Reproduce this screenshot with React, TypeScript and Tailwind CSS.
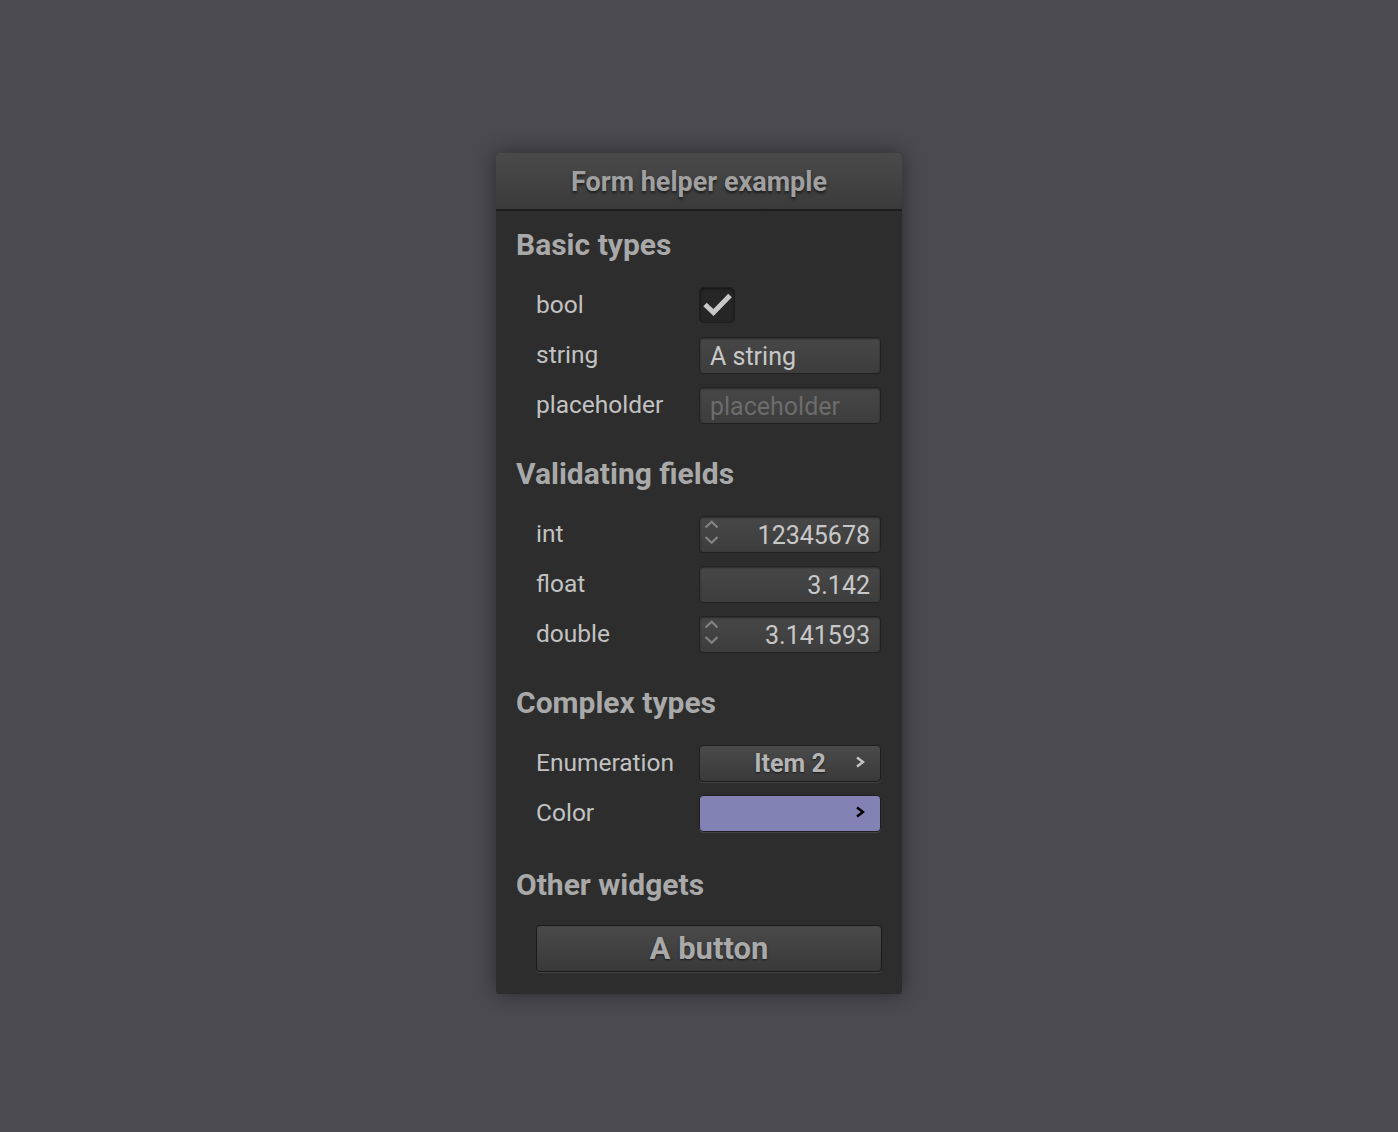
import React from 'react';

const font = { fontFamily: 'Roboto, "Liberation Sans", sans-serif' };

const Spin = () => (
    <svg width="24" height="35" viewBox="0 0 24 35" className="absolute left-0 top-0">
        <path d="M5.5 10.5 L11.7 4.8 L17.5 10.5" fill="none" stroke="#838383" strokeWidth="2.2" />
        <path d="M5.5 20 L11.7 25.7 L17.5 20" fill="none" stroke="#838383" strokeWidth="2.2" />
    </svg>
);

const Chevron = ({ color }: { color: string }) => (
    <svg width="10" height="14" viewBox="0 0 10 14" className="absolute right-[15px] top-[9px]">
        <path d="M2 2.5 L8 7 L2 11.5" fill="none" stroke={color} strokeWidth="2.5" />
    </svg>
);

const Row = ({ label, children }: { label: string; children: React.ReactNode }) => (
    <div className="flex items-center h-[50px] pl-[40px] pr-[21px]">
        <div className="w-[163px] text-[24.5px] text-[#c2c2c2]">{label}</div>
        {children}
    </div>
);

const Heading = ({ title, mt }: { title: string; mt?: string }) => (
    <div className={`h-[38px] leading-[38px] pl-[20px] mb-[16px] text-[30px] font-bold text-[#a9a9a9] ${mt ?? ''}`}>
        {title}
    </div>
);

const Field = ({ children, spin }: { children: React.ReactNode; spin?: boolean }) => (
    <div className="relative w-[182px] h-[37px] rounded-[4px] border border-[#222222] bg-gradient-to-b from-[#474747] to-[#3d3d3d] shadow-[inset_0_1px_2px_rgba(0,0,0,0.4)] flex items-center px-[10px] text-[25px] pt-[3px]">
        {spin && <Spin />}
        {children}
    </div>
);

export default function App() {
    return (
        <div style={font} className="w-[1398px] h-[1132px] bg-[#4b4a50] pt-[153px] flex justify-center">
            <div className="w-[406px] h-[841px] rounded-[3px] bg-[#2d2d2d] shadow-[0_0_20px_rgba(0,0,0,0.45)] flex flex-col overflow-hidden">
                {/* Title bar */}
                <div className="h-[58px] shrink-0 bg-gradient-to-b from-[#4a4a4a] to-[#3b3b3b] border-b-[2px] border-[#1c1c1c] flex items-center justify-center pt-[3px]">
                    <span className="text-[27px] font-bold text-[#a0a0a0] [text-shadow:0_2px_3px_rgba(0,0,0,0.6)]">
                        Form helper example
                    </span>
                </div>

                <div className="pt-[15px]">
                    <Heading title="Basic types" />
                    <Row label="bool">
                        <div className="relative w-[36px] h-[36px] rounded-[5px] bg-[#262626] border border-[#1e1e1e] shadow-[inset_0_1px_3px_rgba(0,0,0,0.5)]">
                            <svg width="36" height="36" viewBox="0 0 36 36" className="absolute -left-px -top-px">
                                <path d="M6 17.5 L14.5 25.5 L31 8.5" fill="none" stroke="#c8c8c8" strokeWidth="5" strokeLinejoin="miter" />
                            </svg>
                        </div>
                    </Row>
                    <Row label="string">
                        <Field><span className="text-[#c8c8c8]">A string</span></Field>
                    </Row>
                    <Row label="placeholder">
                        <Field><span className="text-[#6c6c6c]">placeholder</span></Field>
                    </Row>

                    <Heading title="Validating fields" mt="mt-[25px]" />
                    <Row label="int">
                        <Field spin><span className="ml-auto text-[#c8c8c8]">12345678</span></Field>
                    </Row>
                    <Row label="float">
                        <Field><span className="ml-auto text-[#c8c8c8]">3.142</span></Field>
                    </Row>
                    <Row label="double">
                        <Field spin><span className="ml-auto text-[#c8c8c8]">3.141593</span></Field>
                    </Row>

                    <Heading title="Complex types" mt="mt-[25px]" />
                    <Row label="Enumeration">
                        <div className="relative w-[182px] h-[37px] rounded-[4px] border border-[#1e1e1e] bg-gradient-to-b from-[#4a4a4a] to-[#3a3a3a] shadow-[0_1px_0_rgba(255,255,255,0.1)] flex items-center justify-center pt-[2px]">
                            <span className="text-[25px] font-bold text-[#b4b4b4] [text-shadow:0_1px_2px_rgba(0,0,0,0.6)]">Item 2</span>
                            <Chevron color="#c4c4c4" />
                        </div>
                    </Row>
                    <Row label="Color">
                        <div className="relative w-[182px] h-[37px] rounded-[4px] border border-[#1e1e1e] bg-[#8283b4] shadow-[0_1px_0_rgba(255,255,255,0.1)]">
                            <Chevron color="#000000" />
                        </div>
                    </Row>

                    <Heading title="Other widgets" mt="mt-[28px]" />
                    <div className="pl-[40px] pr-[20px] mt-[21px]">
                        <div className="h-[47px] rounded-[4px] border border-[#1a1a1a] bg-gradient-to-b from-[#4a4a4a] to-[#393939] shadow-[0_1px_0_rgba(255,255,255,0.12)] flex items-center justify-center pt-[2px]">
                            <span className="text-[31px] font-bold text-[#a9a9a9] [text-shadow:0_1px_2px_rgba(0,0,0,0.6)]">A button</span>
                        </div>
                    </div>
                </div>
            </div>
        </div>
    );
}
